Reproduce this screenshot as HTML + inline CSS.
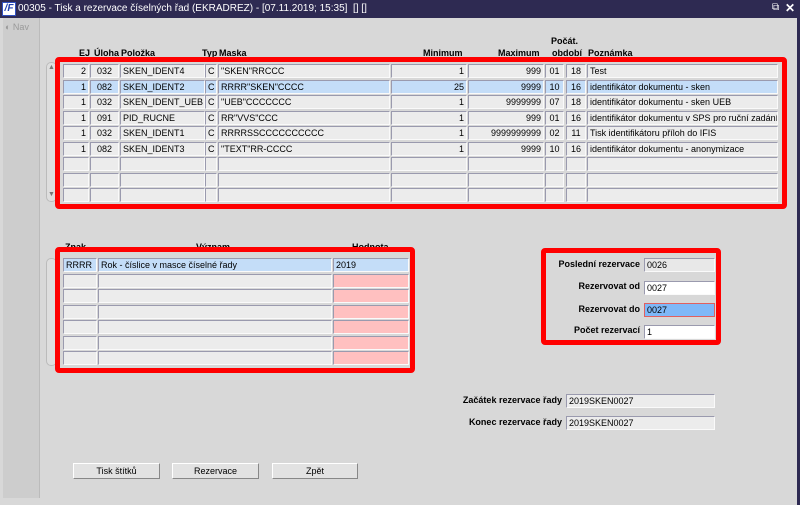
<!DOCTYPE html>
<html><head><meta charset="utf-8"><style>
*{margin:0;padding:0;box-sizing:border-box}
body{width:800px;height:505px;overflow:hidden;background:#d8d8d8;font-family:"Liberation Sans",Arial,sans-serif;font-size:9px;color:#000;position:relative}
.a{position:absolute}
.c{position:absolute;height:14px;background:#ececec;border:1px solid #9a9aae;border-right-color:#fafafa;border-bottom-color:#fafafa;line-height:12px;padding:0 2px;white-space:nowrap;overflow:hidden}
.r{text-align:right}.m{text-align:center}
.s{background:#c4ddf8}
.p{background:#ffc0c0}
.h{position:absolute;font-weight:bold;white-space:nowrap}
.red{position:absolute;border:5px solid #f00;border-radius:4px}
.btn{position:absolute;height:16px;background:#e2e2e2;border:1px solid #fff;border-right-color:#888;border-bottom-color:#888;text-align:center;line-height:14px}
.lbl{position:absolute;font-weight:bold;text-align:right;white-space:nowrap}
</style></head><body>
<div class="a" style="left:0;top:0;width:800px;height:18px;background:#2e2a52"></div>
<div class="a" style="left:2px;top:2px;width:14px;height:14px;background:#fff;border:1px solid #3050c0;color:#2040b0;font-weight:bold;font-style:italic;font-size:10px;line-height:12px;text-align:center">/F</div>
<div class="a" style="left:18px;top:3px;color:#fff;font-size:10px;white-space:nowrap">00305 - Tisk a rezervace číselných řad (EKRADREZ) - [07.11.2019; 15:35]&nbsp; [] []</div>
<div class="a" style="left:772px;top:2px;color:#fff;font-size:10px">⧉</div>
<div class="a" style="left:785px;top:1px;color:#fff;font-size:12px;font-weight:bold">✕</div>
<div class="a" style="left:797px;top:18px;width:3px;height:487px;background:#2e2a52"></div>
<div class="a" style="left:3px;top:18px;width:37px;height:480px;background:#cdcdcd;border-right:1px solid #bbb"></div>
<div class="a" style="left:5px;top:22px;color:#999;font-size:9px">◐ Nav</div>

<div class="h" style="left:79px;top:48px">EJ</div>
<div class="h" style="left:94px;top:48px">Úloha</div>
<div class="h" style="left:121px;top:48px">Položka</div>
<div class="h" style="left:202px;top:48px">Typ</div>
<div class="h" style="left:219px;top:48px">Maska</div>
<div class="h" style="left:423px;top:48px">Minimum</div>
<div class="h" style="left:498px;top:48px">Maximum</div>
<div class="h" style="left:551px;top:36px">Počát.</div>
<div class="h" style="left:552px;top:48px">období</div>
<div class="h" style="left:588px;top:48px">Poznámka</div>

<div class="a" style="left:46px;top:62px;width:11px;height:140px;background:#dedede;border:1px solid #bbb;border-radius:5px"></div>
<div class="a" style="left:48px;top:64px;font-size:7px;color:#777">▲</div>
<div class="a" style="left:48px;top:191px;font-size:7px;color:#777">▼</div>

<div class="c r" style="left:63px;top:64px;width:26px">2</div><div class="c m" style="left:90px;top:64px;width:29px">032</div><div class="c" style="left:120px;top:64px;width:85px">SKEN_IDENT4</div><div class="c m" style="left:205px;top:64px;width:12px">C</div><div class="c" style="left:218px;top:64px;width:172px">"SKEN"RRCCC</div><div class="c r" style="left:391px;top:64px;width:76px">1</div><div class="c r" style="left:468px;top:64px;width:76px">999</div><div class="c m" style="left:545px;top:64px;width:19px">01</div><div class="c m" style="left:566px;top:64px;width:20px">18</div><div class="c" style="left:587px;top:64px;width:191px">Test</div>
<div class="c r s" style="left:63px;top:80px;width:26px">1</div><div class="c m s" style="left:90px;top:80px;width:29px">082</div><div class="c s" style="left:120px;top:80px;width:85px">SKEN_IDENT2</div><div class="c m s" style="left:205px;top:80px;width:12px">C</div><div class="c s" style="left:218px;top:80px;width:172px">RRRR"SKEN"CCCC</div><div class="c r s" style="left:391px;top:80px;width:76px">25</div><div class="c r s" style="left:468px;top:80px;width:76px">9999</div><div class="c m s" style="left:545px;top:80px;width:19px">10</div><div class="c m s" style="left:566px;top:80px;width:20px">16</div><div class="c s" style="left:587px;top:80px;width:191px">identifikátor dokumentu - sken</div>
<div class="c r" style="left:63px;top:95px;width:26px">1</div><div class="c m" style="left:90px;top:95px;width:29px">032</div><div class="c" style="left:120px;top:95px;width:85px">SKEN_IDENT_UEB</div><div class="c m" style="left:205px;top:95px;width:12px">C</div><div class="c" style="left:218px;top:95px;width:172px">"UEB"CCCCCCC</div><div class="c r" style="left:391px;top:95px;width:76px">1</div><div class="c r" style="left:468px;top:95px;width:76px">9999999</div><div class="c m" style="left:545px;top:95px;width:19px">07</div><div class="c m" style="left:566px;top:95px;width:20px">18</div><div class="c" style="left:587px;top:95px;width:191px">identifikátor dokumentu - sken UEB</div>
<div class="c r" style="left:63px;top:111px;width:26px">1</div><div class="c m" style="left:90px;top:111px;width:29px">091</div><div class="c" style="left:120px;top:111px;width:85px">PID_RUCNE</div><div class="c m" style="left:205px;top:111px;width:12px">C</div><div class="c" style="left:218px;top:111px;width:172px">RR"VVS"CCC</div><div class="c r" style="left:391px;top:111px;width:76px">1</div><div class="c r" style="left:468px;top:111px;width:76px">999</div><div class="c m" style="left:545px;top:111px;width:19px">01</div><div class="c m" style="left:566px;top:111px;width:20px">16</div><div class="c" style="left:587px;top:111px;width:191px">identifikátor dokumentu v SPS pro ruční zadání</div>
<div class="c r" style="left:63px;top:126px;width:26px">1</div><div class="c m" style="left:90px;top:126px;width:29px">032</div><div class="c" style="left:120px;top:126px;width:85px">SKEN_IDENT1</div><div class="c m" style="left:205px;top:126px;width:12px">C</div><div class="c" style="left:218px;top:126px;width:172px">RRRRSSCCCCCCCCCC</div><div class="c r" style="left:391px;top:126px;width:76px">1</div><div class="c r" style="left:468px;top:126px;width:76px">9999999999</div><div class="c m" style="left:545px;top:126px;width:19px">02</div><div class="c m" style="left:566px;top:126px;width:20px">11</div><div class="c" style="left:587px;top:126px;width:191px">Tisk identifikátoru příloh do IFIS</div>
<div class="c r" style="left:63px;top:142px;width:26px">1</div><div class="c m" style="left:90px;top:142px;width:29px">082</div><div class="c" style="left:120px;top:142px;width:85px">SKEN_IDENT3</div><div class="c m" style="left:205px;top:142px;width:12px">C</div><div class="c" style="left:218px;top:142px;width:172px">"TEXT"RR-CCCC</div><div class="c r" style="left:391px;top:142px;width:76px">1</div><div class="c r" style="left:468px;top:142px;width:76px">9999</div><div class="c m" style="left:545px;top:142px;width:19px">10</div><div class="c m" style="left:566px;top:142px;width:20px">16</div><div class="c" style="left:587px;top:142px;width:191px">identifikátor dokumentu - anonymizace</div>
<div class="c" style="left:63px;top:157px;width:26px"></div><div class="c" style="left:90px;top:157px;width:29px"></div><div class="c" style="left:120px;top:157px;width:85px"></div><div class="c" style="left:205px;top:157px;width:12px"></div><div class="c" style="left:218px;top:157px;width:172px"></div><div class="c" style="left:391px;top:157px;width:76px"></div><div class="c" style="left:468px;top:157px;width:76px"></div><div class="c" style="left:545px;top:157px;width:19px"></div><div class="c" style="left:566px;top:157px;width:20px"></div><div class="c" style="left:587px;top:157px;width:191px"></div>
<div class="c" style="left:63px;top:173px;width:26px"></div><div class="c" style="left:90px;top:173px;width:29px"></div><div class="c" style="left:120px;top:173px;width:85px"></div><div class="c" style="left:205px;top:173px;width:12px"></div><div class="c" style="left:218px;top:173px;width:172px"></div><div class="c" style="left:391px;top:173px;width:76px"></div><div class="c" style="left:468px;top:173px;width:76px"></div><div class="c" style="left:545px;top:173px;width:19px"></div><div class="c" style="left:566px;top:173px;width:20px"></div><div class="c" style="left:587px;top:173px;width:191px"></div>
<div class="c" style="left:63px;top:188px;width:26px"></div><div class="c" style="left:90px;top:188px;width:29px"></div><div class="c" style="left:120px;top:188px;width:85px"></div><div class="c" style="left:205px;top:188px;width:12px"></div><div class="c" style="left:218px;top:188px;width:172px"></div><div class="c" style="left:391px;top:188px;width:76px"></div><div class="c" style="left:468px;top:188px;width:76px"></div><div class="c" style="left:545px;top:188px;width:19px"></div><div class="c" style="left:566px;top:188px;width:20px"></div><div class="c" style="left:587px;top:188px;width:191px"></div>
<div class="red" style="left:55px;top:57px;width:732px;height:152px"></div>

<div class="h" style="left:65px;top:242px">Znak</div>
<div class="h" style="left:196px;top:242px">Význam</div>
<div class="h" style="left:352px;top:242px">Hodnota</div>
<div class="a" style="left:46px;top:258px;width:11px;height:108px;background:#dedede;border:1px solid #bbb;border-radius:5px"></div>
<div class="c s" style="left:63px;top:258px;width:34px">RRRR</div><div class="c s" style="left:98px;top:258px;width:234px">Rok - číslice v masce číselné řady</div><div class="c s" style="left:333px;top:258px;width:76px">2019</div>
<div class="c" style="left:63px;top:274px;width:34px"></div><div class="c" style="left:98px;top:274px;width:234px"></div><div class="c p" style="left:333px;top:274px;width:76px"></div>
<div class="c" style="left:63px;top:289px;width:34px"></div><div class="c" style="left:98px;top:289px;width:234px"></div><div class="c p" style="left:333px;top:289px;width:76px"></div>
<div class="c" style="left:63px;top:305px;width:34px"></div><div class="c" style="left:98px;top:305px;width:234px"></div><div class="c p" style="left:333px;top:305px;width:76px"></div>
<div class="c" style="left:63px;top:320px;width:34px"></div><div class="c" style="left:98px;top:320px;width:234px"></div><div class="c p" style="left:333px;top:320px;width:76px"></div>
<div class="c" style="left:63px;top:336px;width:34px"></div><div class="c" style="left:98px;top:336px;width:234px"></div><div class="c p" style="left:333px;top:336px;width:76px"></div>
<div class="c" style="left:63px;top:351px;width:34px"></div><div class="c" style="left:98px;top:351px;width:234px"></div><div class="c p" style="left:333px;top:351px;width:76px"></div>
<div class="red" style="left:55px;top:247px;width:360px;height:126px"></div>

<div class="lbl" style="left:540px;top:259px;width:100px">Poslední rezervace</div>
<div class="c" style="left:644px;top:258px;width:71px;background:#e8e8e8">0026</div>
<div class="lbl" style="left:540px;top:281px;width:100px">Rezervovat od</div>
<div class="c" style="left:644px;top:281px;width:71px;background:#fff">0027</div>
<div class="lbl" style="left:540px;top:304px;width:100px">Rezervovat do</div>
<div class="c" style="left:644px;top:303px;width:71px;background:#7fb8f8;border-color:#e06060">0027</div>
<div class="lbl" style="left:540px;top:325px;width:100px">Počet rezervací</div>
<div class="c" style="left:644px;top:325px;width:71px;background:#fff">1</div>
<div class="red" style="left:541px;top:248px;width:180px;height:97px"></div>

<div class="lbl" style="left:430px;top:395px;width:132px">Začátek rezervace řady</div>
<div class="c" style="left:566px;top:394px;width:149px">2019SKEN0027</div>
<div class="lbl" style="left:430px;top:417px;width:132px">Konec rezervace řady</div>
<div class="c" style="left:566px;top:416px;width:149px">2019SKEN0027</div>

<div class="btn" style="left:73px;top:463px;width:87px">Tisk štítků</div>
<div class="btn" style="left:172px;top:463px;width:87px">Rezervace</div>
<div class="btn" style="left:272px;top:463px;width:86px">Zpět</div>
</body></html>
